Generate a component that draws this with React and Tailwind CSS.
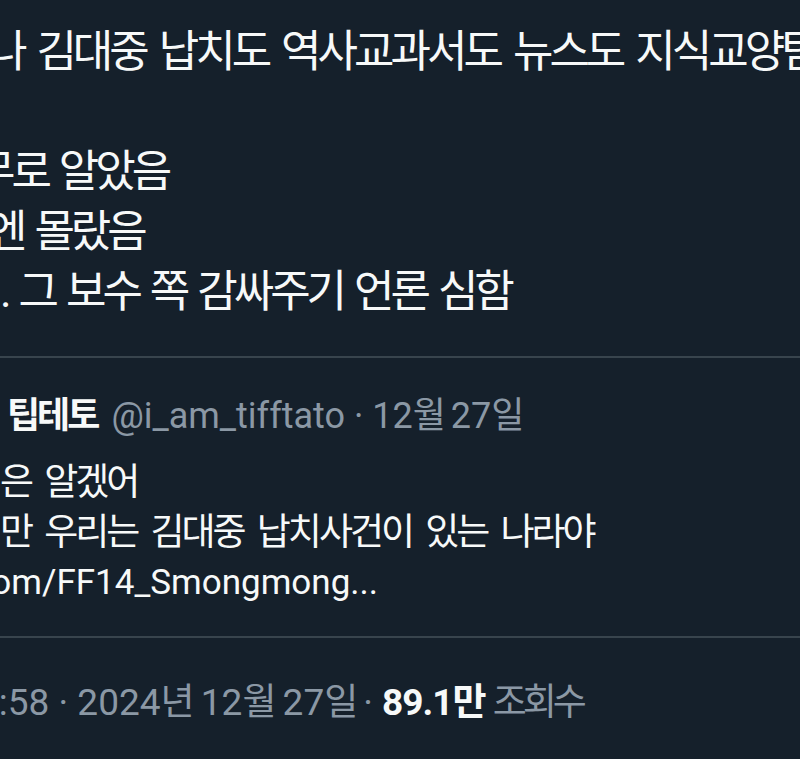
import React from "react";

function K({ children, className = "" }) {
  return <span className={className}>{children}</span>;
}

export default function App() {
  return (
    <div
      className="w-[800px] h-[759px] overflow-hidden bg-[#15202b] whitespace-nowrap"
      style={{ fontFamily: 'Roboto, "Noto Sans CJK KR", sans-serif' }}
    >
      {/* main tweet text */}
      <div className="pt-[22px] text-[44px] leading-[60px] text-[#f7f9f9] tracking-[-4px] [word-spacing:4px]">
        <div className="-ml-[13px] [word-spacing:6px]">나 김대중 납치도 역사교과서도 뉴스도 지식교양탐</div>
        <div className="h-[60px]"></div>
        <div className="-ml-[25px]">무로 알았음</div>
        <div className="-ml-[13px]">엔 몰랐음</div>
        <div className="ml-0">. 그 보수 쪽 감싸주기 언론 심함</div>
      </div>

      <div className="mt-[34px] h-[2px] bg-[#38444d]"></div>

      {/* quoted tweet */}
      <div className="pt-[33px] text-[36px] leading-[50px]">
        <div className="flex items-baseline ml-[7px]">
          <span className="font-bold text-[#f7f9f9] tracking-[-3px]">팁테토</span>
          <span className="ml-[14px] text-[#8b98a5]">
            @i_am_tifftato · 12<K className="tracking-[-4px]">월</K> 27<K className="tracking-[-4px]">일</K>
          </span>
        </div>
        <div className="mt-[17px] text-[37px] text-[#f7f9f9] tracking-[-3px] [word-spacing:7px]">
          <div className="ml-[0px]">은 알겠어</div>
          <div className="ml-[0px]">만 우리는 김대중 납치사건이 있는 나라야</div>
        </div>
        <div className="-ml-[27px] text-[35px] text-[#f7f9f9]">com/FF14_Smongmong...</div>
      </div>

      <div className="mt-[28px] h-[2px] bg-[#38444d]"></div>

      {/* timestamp line */}
      <div className="mt-[40px] text-[37px] leading-[50px] text-[#8b98a5] -ml-[22px]">
        1:58 · 2024<K className="tracking-[-3px]">년</K> 12<K className="tracking-[-3px]">월</K> 27<K className="tracking-[-3px]">일</K>
        <span className="ml-[8px]">·</span>{" "}
        <span className="font-bold text-[#f7f9f9] tracking-[-1px]">89.1<K className="tracking-[-3px]">만</K></span>{" "}
        <K className="tracking-[-4px]">조회수</K>
      </div>
    </div>
  );
}
